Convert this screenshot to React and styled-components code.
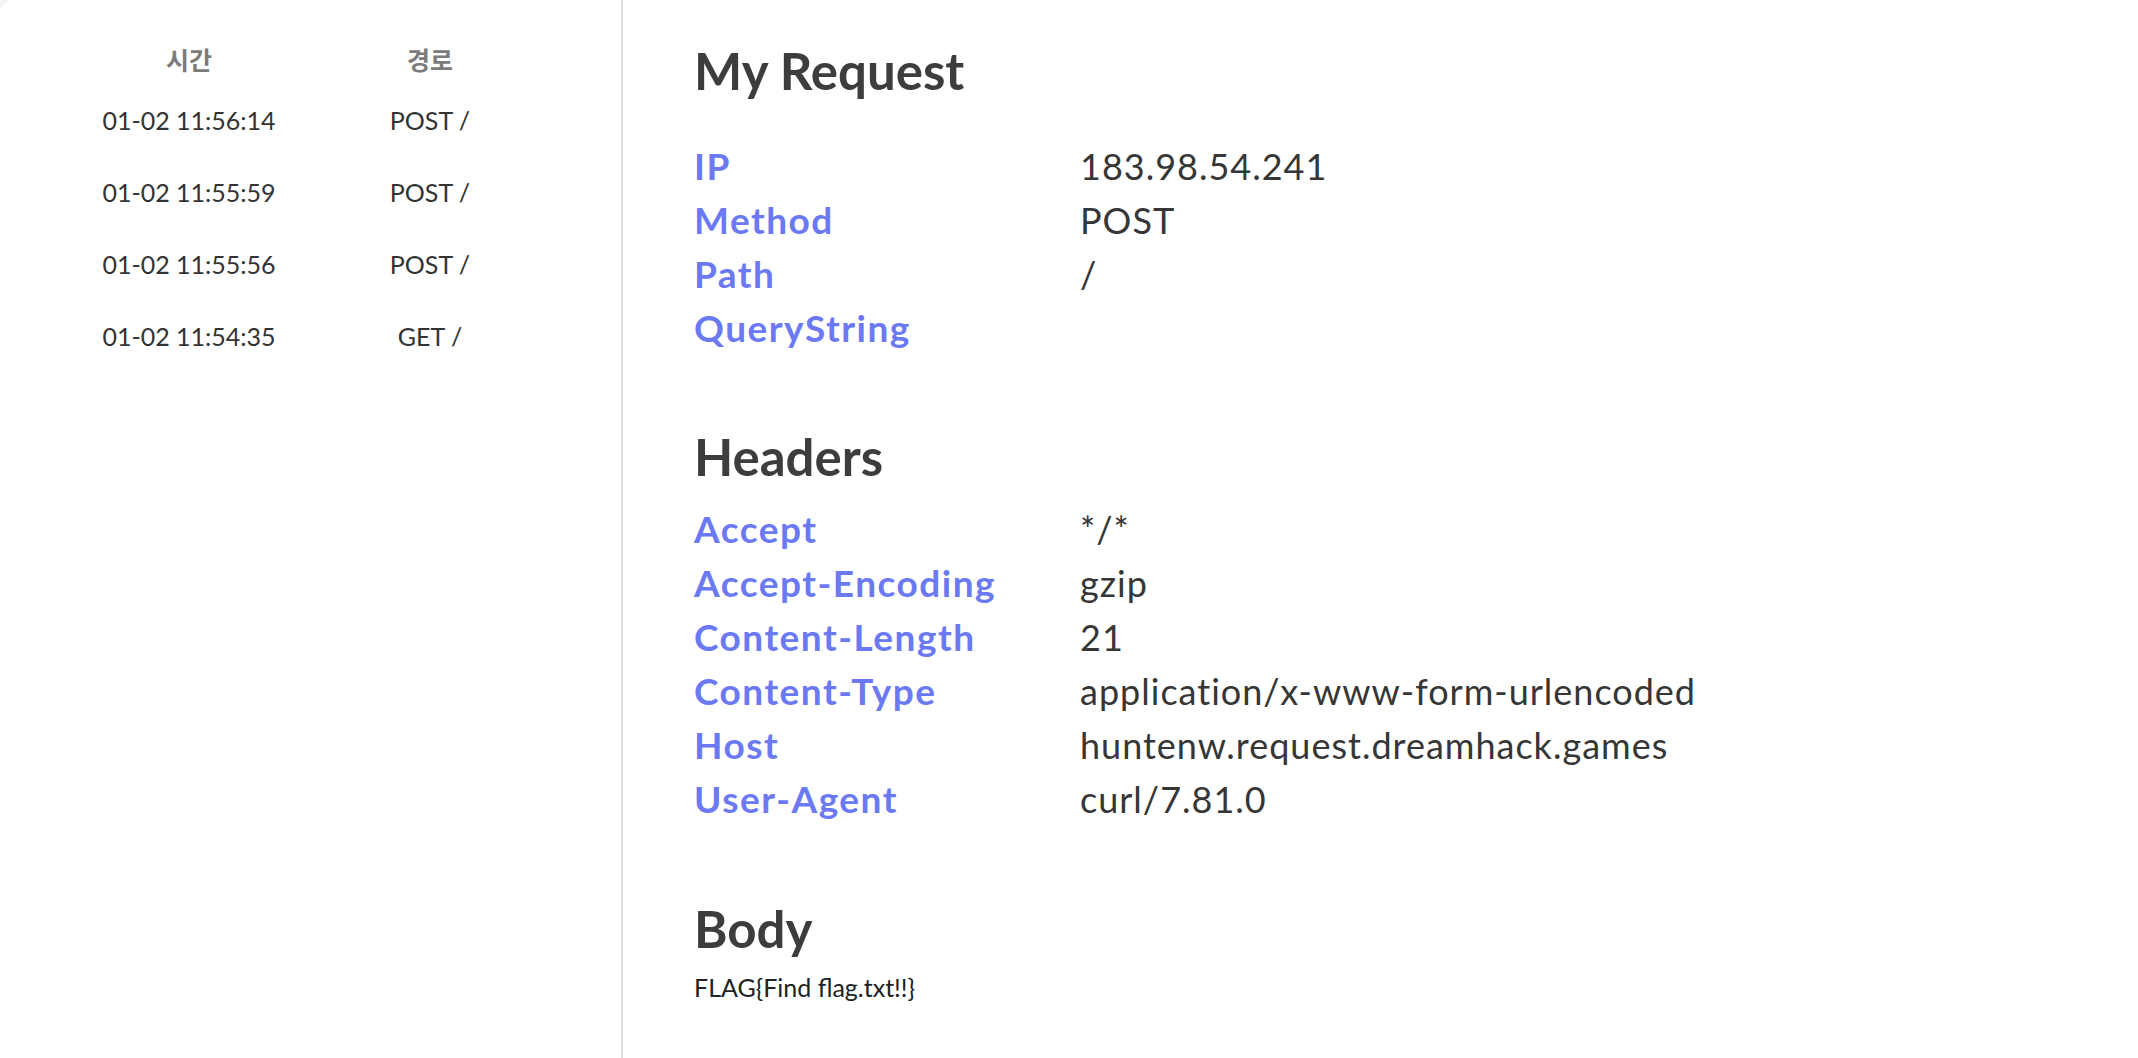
import React from "react";
import styled, { createGlobalStyle } from "styled-components";

const Global = createGlobalStyle`
  html, body { margin: 0; padding: 0; background: #f4f4f6; }
  body { font-family: "Lato", "Noto Sans CJK KR", sans-serif; color: #333; }
  * { box-sizing: border-box; }
`;

const Layout = styled.div`
  display: flex;
  height: 100vh;
  background: #ffffff;
  border-top-left-radius: 14px;
  overflow: hidden;
`;

const Sidebar = styled.aside`
  width: 623px;
  flex: none;
  border-right: 2px solid #dcdce3;
  padding: 39px 0 0 64px;
`;

const LogTable = styled.div`
  display: grid;
  grid-template-columns: 250px 232px;
`;

const LogHead = styled.div`
  height: 40px;
  display: flex;
  align-items: center;
  justify-content: center;
  font-family: "Noto Sans CJK KR", sans-serif;
  font-weight: 700;
  font-size: 25px;
  color: #7b7b7b;
  margin-bottom: 5px;
`;

const LogCell = styled.div`
  height: 72px;
  display: flex;
  align-items: center;
  justify-content: center;
  font-size: 25px;
  color: #333;
  white-space: nowrap;
`;

const Main = styled.main`
  flex: 1;
  padding: 39px 0 0 71px;
`;

const Heading = styled.h2`
  margin: 0 0 ${(p) => p.$gap}px 0;
  height: 64px;
  line-height: 64px;
  font-size: 51px;
  font-weight: 700;
  color: #3d3d3d;
`;

const Section = styled.section`
  margin-bottom: ${(p) => p.$gap}px;
`;

const KvGrid = styled.div`
  display: grid;
  grid-template-columns: 386px auto;
  justify-content: start;
`;

const Key = styled.div`
  height: 54px;
  line-height: 54px;
  font-size: 37px;
  font-weight: 700;
  letter-spacing: 1.5px;
  color: #6b79f2;
  white-space: nowrap;
`;

const Value = styled.div`
  height: 54px;
  line-height: 54px;
  font-size: 36px;
  letter-spacing: 1px;
  color: #363636;
  white-space: nowrap;
`;

const BodyText = styled.div`
  line-height: 36px;
  font-size: 25px;
  color: #222;
`;

const logs = [
  ["01-02 11:56:14", "POST /"],
  ["01-02 11:55:59", "POST /"],
  ["01-02 11:55:56", "POST /"],
  ["01-02 11:54:35", "GET /"],
];

const request = [
  ["IP", "183.98.54.241"],
  ["Method", "POST"],
  ["Path", "/"],
  ["QueryString", ""],
];

const headers = [
  ["Accept", "*/*"],
  ["Accept-Encoding", "gzip"],
  ["Content-Length", "21"],
  ["Content-Type", "application/x-www-form-urlencoded"],
  ["Host", "huntenw.request.dreamhack.games"],
  ["User-Agent", "curl/7.81.0"],
];

function KeyValues({ rows }) {
  return (
    <KvGrid>
      {rows.map(([k, v]) => (
        <React.Fragment key={k}>
          <Key>{k}</Key>
          <Value>{v}</Value>
        </React.Fragment>
      ))}
    </KvGrid>
  );
}

export default function App() {
  return (
    <>
      <Global />
      <Layout>
        <Sidebar>
          <LogTable>
            <LogHead>시간</LogHead>
            <LogHead>경로</LogHead>
            {logs.map(([t, p], i) => (
              <React.Fragment key={i}>
                <LogCell>{t}</LogCell>
                <LogCell>{p}</LogCell>
              </React.Fragment>
            ))}
          </LogTable>
        </Sidebar>
        <Main>
          <Section $gap={70}>
            <Heading $gap={36}>My Request</Heading>
            <KeyValues rows={request} />
          </Section>
          <Section $gap={71}>
            <Heading $gap={13}>Headers</Heading>
            <KeyValues rows={headers} />
          </Section>
          <Section $gap={0}>
            <Heading $gap={8}>Body</Heading>
            <BodyText>FLAG{"{"}Find flag.txt!!{"}"}</BodyText>
          </Section>
        </Main>
      </Layout>
    </>
  );
}
